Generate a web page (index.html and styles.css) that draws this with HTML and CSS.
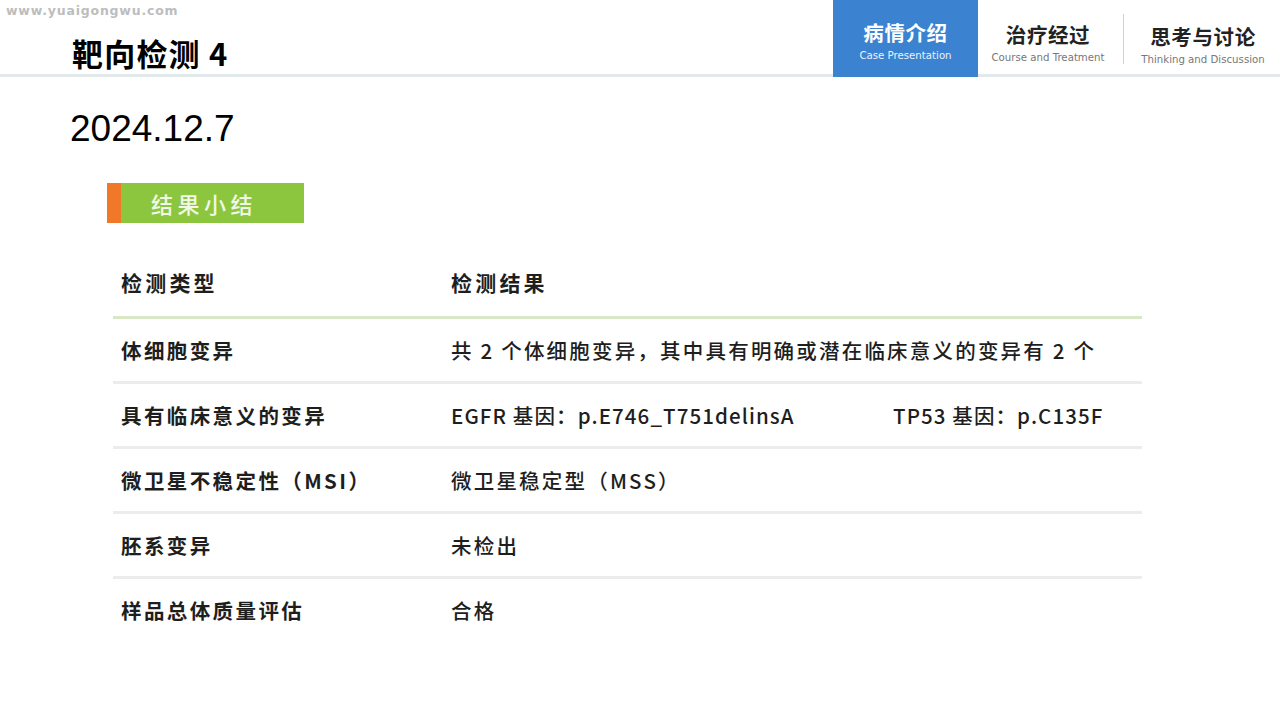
FILE: index.html
```html
<!DOCTYPE html>
<html lang="zh-CN">
<head>
<meta charset="utf-8">
<title>靶向检测 4</title>
<link rel="stylesheet" href="styles.css">
</head>
<body>
<header class="topbar">
  <div class="brand">
    <div class="watermark">www.yuaigongwu.com</div>
    <h1 class="title">靶向检测 4</h1>
  </div>
  <nav class="tabs">
    <div class="tab active">
      <span class="tab-cn">病情介绍</span>
      <span class="tab-en">Case Presentation</span>
    </div>
    <div class="tab mid">
      <span class="tab-cn">治疗经过</span>
      <span class="tab-en">Course and Treatment</span>
    </div>
    <div class="tab-sep"></div>
    <div class="tab wide">
      <span class="tab-cn">思考与讨论</span>
      <span class="tab-en">Thinking and Discussion</span>
    </div>
  </nav>
</header>
<main class="content">
  <div class="date">2024.12.7</div>
  <div class="badge"><span class="badge-bar"></span><span class="badge-text">结果小结</span></div>
  <div class="table">
    <div class="row head">
      <div class="cell">检测类型</div>
      <div class="cell">检测结果</div>
    </div>
    <div class="row">
      <div class="cell label">体细胞变异</div>
      <div class="cell value">共 2 个体细胞变异，其中具有明确或潜在临床意义的变异有 2 个</div>
    </div>
    <div class="row">
      <div class="cell label">具有临床意义的变异</div>
      <div class="cell value split"><span class="v1">EGFR 基因：p.E746_T751delinsA</span><span class="v2">TP53 基因：p.C135F</span></div>
    </div>
    <div class="row">
      <div class="cell label">微卫星不稳定性（MSI）</div>
      <div class="cell value">微卫星稳定型（MSS）</div>
    </div>
    <div class="row">
      <div class="cell label">胚系变异</div>
      <div class="cell value">未检出</div>
    </div>
    <div class="row last">
      <div class="cell label">样品总体质量评估</div>
      <div class="cell value">合格</div>
    </div>
  </div>
</main>
</body>
</html>
```
FILE: styles.css
```css
html, body {
  margin: 0;
  padding: 0;
  background: #ffffff;
}
body {
  width: 1280px;
  height: 720px;
  overflow: hidden;
  font-family: "Noto Sans CJK SC", "Noto Sans", sans-serif;
  color: #111;
}
.topbar {
  display: flex;
  justify-content: space-between;
  height: 74px;
  border-bottom: 3px solid #e2e9ed;
}
.brand {
  display: flex;
  flex-direction: column;
}
.watermark {
  font-family: "DejaVu Sans", sans-serif;
  font-weight: bold;
  font-size: 12.5px;
  color: #bdbdbd;
  letter-spacing: 0.8px;
  margin: 3px 0 0 6px;
  line-height: 16px;
}
.title {
  margin: 13px 0 0 72px;
  font-family: "Noto Sans CJK SC", sans-serif;
  font-weight: 700;
  font-size: 31px;
  line-height: 42px;
  letter-spacing: 1.2px;
  color: #000;
}
.tabs {
  display: flex;
  align-items: stretch;
  height: 77px;
  margin-bottom: -3px;
}
.tab {
  width: 145px;
  display: flex;
  flex-direction: column;
  align-items: center;
  padding-top: 19px;
  box-sizing: border-box;
  color: #222;
}
.tab.mid {
  padding-right: 5px;
}
.tab.wide {
  width: 156px;
  padding-top: 21px;
  padding-left: 2px;
}
.tab.active {
  background: #3b83d1;
  color: #fff;
}
.tab-cn {
  font-family: "Noto Sans CJK SC", sans-serif;
  font-weight: 700;
  font-size: 20.5px;
  line-height: 26px;
  letter-spacing: 0.6px;
}
.tab:not(.active) .tab-cn {
  margin-top: 2px;
}
.tab-en {
  font-family: "DejaVu Sans", sans-serif;
  font-size: 10.2px;
  line-height: 14px;
  margin-top: 4px;
  letter-spacing: 0;
  color: #777;
}
.tab.active .tab-en {
  color: #eaf2fb;
}
.tab-sep {
  width: 1px;
  background: #d2d2d2;
  margin: 14px 0 13px;
}
.content {
  padding-left: 70px;
}
.date {
  margin-top: 30px;
  font-family: "Liberation Sans", Arial, sans-serif;
  font-size: 37px;
  line-height: 44px;
  color: #000;
}
.badge {
  display: flex;
  width: 197px;
  height: 40px;
  margin: 32px 0 0 37px;
  background: #8cc63f;
  align-items: center;
}
.badge-bar {
  width: 14px;
  height: 100%;
  background: #f07828;
}
.badge-text {
  margin-left: 30px;
  font-family: "Noto Sans CJK SC", sans-serif;
  font-weight: 500;
  font-size: 22px;
  letter-spacing: 4.5px;
  color: #f1f8e6;
}
.table {
  width: 1029px;
  margin: 23px 0 0 43px;
}
.row {
  display: grid;
  grid-template-columns: 338px 1fr;
  height: 62px;
  align-items: center;
  border-bottom: 3px solid #ececec;
  font-size: 20.5px;
  color: #1e1e1e;
}
.row.head {
  height: 70px;
  border-bottom-color: #d8e8c4;
}
.row.last {
  border-bottom: none;
}
.cell {
  padding-left: 8px;
  white-space: nowrap;
}
.row.head .cell {
  font-weight: 700;
  font-size: 21px;
  letter-spacing: 3.2px;
  padding-top: 2px;
}
.cell.label {
  padding-left: 8px;
  font-weight: 700;
  letter-spacing: 2.4px;
}
.cell.value {
  padding-left: 0;
  font-weight: 500;
  letter-spacing: 2.2px;
}
.row.head .cell + .cell {
  padding-left: 0;
}
.split {
  display: flex;
}
.v1, .v2 {
  letter-spacing: 1.1px;
}
.v1 {
  width: 442px;
}
```
